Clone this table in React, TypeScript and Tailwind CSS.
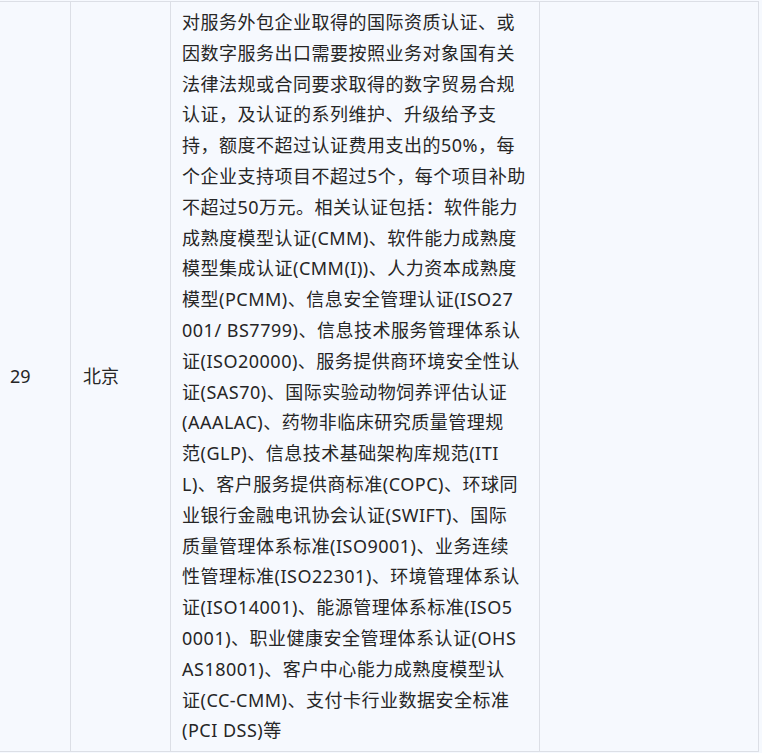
const lines = [
  '对服务外包企业取得的国际资质认证、或',
  '因数字服务出口需要按照业务对象国有关',
  '法律法规或合同要求取得的数字贸易合规',
  '认证，及认证的系列维护、升级给予支',
  '持，额度不超过认证费用支出的50%，每',
  '个企业支持项目不超过5个，每个项目补助',
  '不超过50万元。相关认证包括：软件能力',
  '成熟度模型认证(CMM)、软件能力成熟度',
  '模型集成认证(CMM(I))、人力资本成熟度',
  '模型(PCMM)、信息安全管理认证(ISO27',
  '001/ BS7799)、信息技术服务管理体系认',
  '证(ISO20000)、服务提供商环境安全性认',
  '证(SAS70)、国际实验动物饲养评估认证',
  '(AAALAC)、药物非临床研究质量管理规',
  '范(GLP)、信息技术基础架构库规范(ITI',
  'L)、客户服务提供商标准(COPC)、环球同',
  '业银行金融电讯协会认证(SWIFT)、国际',
  '质量管理体系标准(ISO9001)、业务连续',
  '性管理标准(ISO22301)、环境管理体系认',
  '证(ISO14001)、能源管理体系标准(ISO5',
  '0001)、职业健康安全管理体系认证(OHS',
  'AS18001)、客户中心能力成熟度模型认',
  '证(CC-CMM)、支付卡行业数据安全标准',
  '(PCI DSS)等',
];

export default function App() {
  return (
    <div className="min-h-screen w-full bg-[#f6f9fe] pt-px font-['Noto_Sans','Noto_Sans_CJK_SC',sans-serif] text-[18px] text-[#262626]">
      <div className="grid w-[759px] grid-cols-[71px_100px_369px_219px] border-y border-[#dcdfe6]">
        <div className="flex items-center border-r border-[#dcdfe6] pl-[10px]">29</div>
        <div className="flex items-center border-r border-[#dcdfe6] pl-[12px]">北京</div>
        <div className="border-r border-[#dcdfe6] py-[5px] pl-[11px] leading-[30.8px] tracking-[0.5px]">
          {lines.map((l, i) => (
            <div key={i} className="whitespace-nowrap">{l}</div>
          ))}
        </div>
        <div className="border-r border-[#dcdfe6]" />
      </div>
    </div>
  );
}
